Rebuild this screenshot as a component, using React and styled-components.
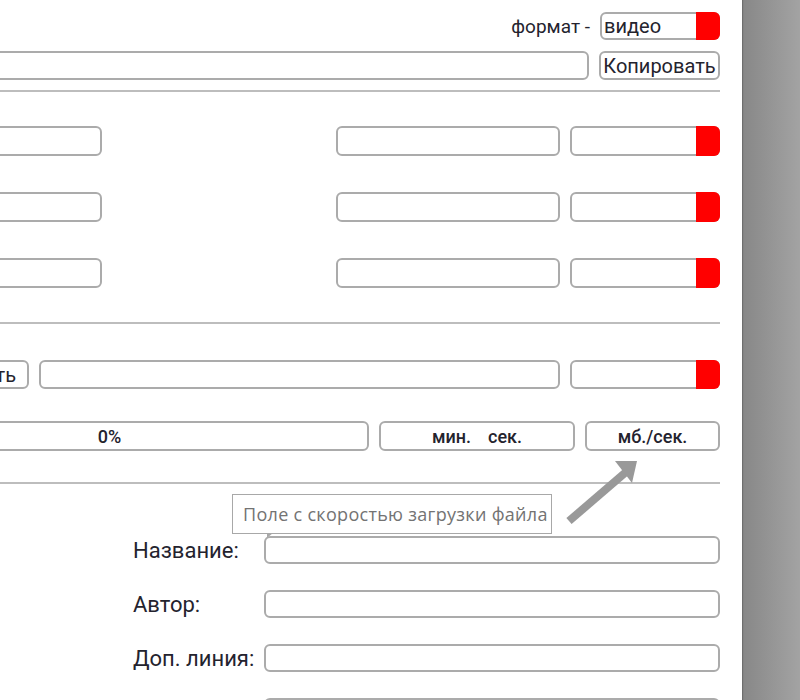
import React from 'react'
import styled, { createGlobalStyle } from 'styled-components'

const GlobalStyle = createGlobalStyle`
  html, body {
    margin: 0;
    padding: 0;
    background: #9a9a9a;
  }
  body {
    font-family: Roboto, 'Liberation Sans', sans-serif;
    color: #24232e;
  }
`

const App = () => {
  return (
    <Page>
      <GlobalStyle />
      <Panel>
        <Inner>
          <Section $pt={12} $pb={10} $gap={11}>
            <Row $justify="flex-end">
              <FormatLabel>формат -</FormatLabel>
              <Select $w={120} $h={28}>
                <SelectText>видео</SelectText>
                <Knob />
              </Select>
            </Row>
            <Row>
              <Field $h={29} />
              <Button $w={121}>Копировать</Button>
            </Row>
          </Section>
          <Divider />

          <Section $pt={34} $pb={34} $gap={36}>
            {[0, 1, 2].map((i) => (
              <Row key={i}>
                <Field $w={252} $h={30} />
                <Field $w={224} $h={30} $push />
                <Select $w={150} $h={30}>
                  <SelectText />
                  <Knob />
                </Select>
              </Row>
            ))}
          </Section>
          <Divider />

          <Section $pt={36} $pb={31} $gap={32}>
            <LoadRow>
              <LoadButton>Скачать</LoadButton>
              <Field $h={29} />
              <Select $w={150} $h={29}>
                <SelectText />
                <Knob />
              </Select>
            </LoadRow>
            <Row>
              <Stat $w={519}>0%</Stat>
              <Stat $w={196}>
                <span>мин.</span>
                <span>сек.</span>
              </Stat>
              <Stat $w={135}>мб./сек.</Stat>
            </Row>
          </Section>
          <Divider />

          <Form>
            <Label>Название:</Label>
            <Field $h={28} />
            <Label>Автор:</Label>
            <Field $h={28} />
            <Label>Доп. линия:</Label>
            <Field $h={28} />
            <Label />
            <Field $h={28} />
          </Form>
        </Inner>

        <Tooltip>Поле с скоростью загрузки файла</Tooltip>
        <Pointer width="85" height="75" viewBox="0 0 85 75">
          <line x1="9" y1="66" x2="66" y2="17" stroke="#999" strokeWidth="8" />
          <polygon points="55,6 77,6 72,28" fill="#999" />
        </Pointer>
      </Panel>
      <Side />
    </Page>
  )
}

export default App

const Page = styled.div`
  display: flex;
  width: 800px;
  height: 700px;
  overflow: hidden;
`

const Panel = styled.div`
  flex: 0 0 742px;
  position: relative;
  background: #fff;
  overflow: hidden;
  box-shadow: 1px 0 1px #6e6e6e;
  z-index: 1;
`

const Side = styled.div`
  flex: 1;
  background: linear-gradient(to right, #878787, #a3a3a3);
`

const Inner = styled.div`
  width: 870px;
  margin-left: -150px;
`

const Section = styled.div`
  display: flex;
  flex-direction: column;
  gap: ${(p) => p.$gap}px;
  padding: ${(p) => p.$pt}px 0 ${(p) => p.$pb}px;
`

const Row = styled.div`
  display: flex;
  align-items: center;
  justify-content: ${(p) => p.$justify || 'flex-start'};
  gap: 10px;
`

const LoadRow = styled.div`
  display: grid;
  grid-template-columns: 179px 1fr 150px;
  column-gap: 10px;
  align-items: center;
`

const Divider = styled.div`
  height: 2px;
  background: #bdbdbd;
`

const boxBorder = `
  box-sizing: border-box;
  border: 2px solid #ababab;
  border-radius: 6px;
  background: #fff;
`

const Field = styled.div`
  ${boxBorder}
  height: ${(p) => p.$h}px;
  ${(p) => (p.$w ? `width: ${p.$w}px; flex: none;` : 'flex: 1;')}
  ${(p) => (p.$push ? 'margin-left: auto;' : '')}
`

const Select = styled.div`
  ${boxBorder}
  display: flex;
  align-items: stretch;
  flex: none;
  width: ${(p) => p.$w}px;
  height: ${(p) => p.$h}px;
`

const SelectText = styled.div`
  flex: 1;
  display: flex;
  align-items: center;
  padding-left: 2px;
  font-size: 20px;
`

const Knob = styled.div`
  width: 24px;
  margin: -2px -2px -2px 0;
  background: #ff0000;
  border-radius: 0 6px 6px 0;
`

const FormatLabel = styled.span`
  font-size: 19px;
`

const Button = styled.div`
  ${boxBorder}
  flex: none;
  width: ${(p) => p.$w}px;
  height: 29px;
  display: flex;
  align-items: center;
  justify-content: center;
  font-size: 20px;
  white-space: nowrap;
`

const LoadButton = styled(Button)`
  width: auto;
  justify-self: end;
  padding: 0 11px;
`

const Stat = styled.div`
  ${boxBorder}
  flex: none;
  width: ${(p) => p.$w}px;
  height: 30px;
  display: flex;
  align-items: center;
  justify-content: center;
  gap: 17px;
  font-size: 18px;
  font-weight: 500;
`

const Form = styled.div`
  display: grid;
  grid-template-columns: 125px 1fr;
  column-gap: 6px;
  row-gap: 26px;
  align-items: center;
  padding: 52px 0 0 283px;
`

const Label = styled.div`
  font-size: 22px;
  white-space: nowrap;
`

const Tooltip = styled.div`
  position: absolute;
  left: 232px;
  top: 494px;
  width: 320px;
  height: 40px;
  box-sizing: border-box;
  border: 1px solid #a8a8a8;
  background: #fff;
  display: flex;
  align-items: center;
  padding-left: 10px;
  font-family: 'Open Sans', 'Noto Sans', sans-serif;
  font-size: 18px;
  letter-spacing: 0.3px;
  color: #737373;
  white-space: nowrap;

  &::after {
    content: '';
    position: absolute;
    left: 34px;
    bottom: -5px;
    width: 0;
    height: 0;
    border-top: 5px solid #a8a8a8;
    border-right: 6px solid transparent;
  }
`

const Pointer = styled.svg`
  position: absolute;
  left: 560px;
  top: 455px;
`
